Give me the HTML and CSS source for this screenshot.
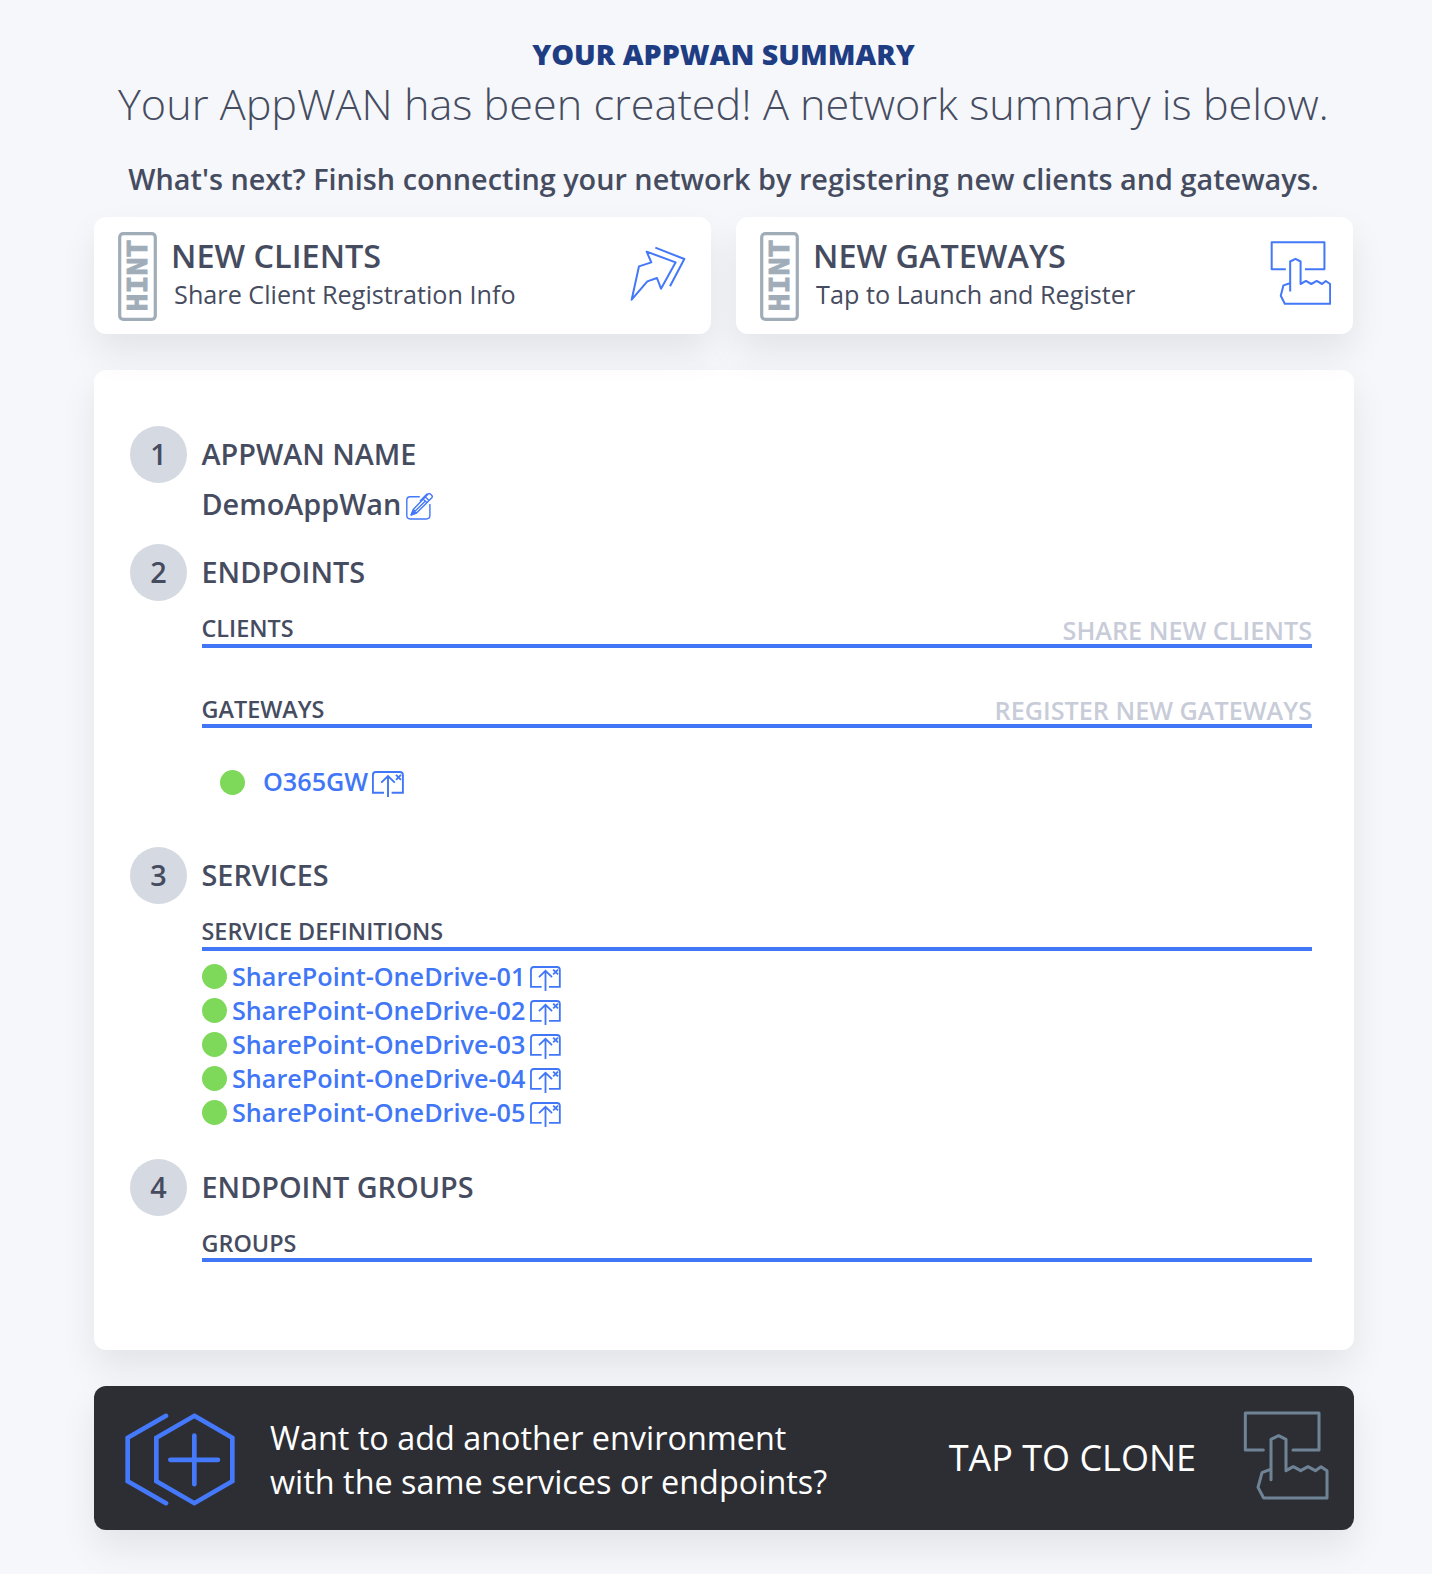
FILE: index.html
```
<!DOCTYPE html>
<html lang="en">
<head>
<meta charset="utf-8">
<title>Your AppWAN Summary</title>
<link rel="stylesheet" href="styles.css">
</head>
<body>
<svg class="sprite" aria-hidden="true">
  <symbol id="hint" viewBox="0 0 39 89">
    <rect x="1.7" y="1.7" width="35.6" height="85.6" rx="3.5" fill="none" stroke="currentColor" stroke-width="3.2"/>
    <text class="hint-text" transform="translate(29 79.6) rotate(-90)" textLength="72" lengthAdjust="spacingAndGlyphs">HINT</text>
  </symbol>
  <symbol id="launch" viewBox="0 0 32 26">
    <g fill="none" stroke="currentColor" stroke-width="1.9">
      <path d="M12 21.7H.9V4q0-3 3-3h24q3 0 3 3v17.7H19.6"/>
      <path d="M16 26V5M9.2 11.6 16 5l6.8 6.6M24 3.8l5 5M29 3.8l-5 5"/>
    </g>
  </symbol>
</svg>
<main class="page">
  <h1 class="title">YOUR APPWAN SUMMARY</h1>
  <p class="lead">Your AppWAN has been created! A network summary is below.</p>
  <p class="next">What's next? Finish connecting your network by registering new clients and gateways.</p>

  <div class="hints">
    <div class="hint-card">
      <svg class="hint-badge"><use href="#hint"/></svg>
      <div class="hint-copy">
        <div class="hint-title">NEW CLIENTS</div>
        <div class="hint-sub">Share Client Registration Info</div>
      </div>
      <svg class="icon-share" viewBox="60 48 168 168" fill="none" stroke="currentColor" stroke-width="6" stroke-linejoin="round">
        <path d="M110 65 197 97 153 176 141 144 112 154 65 209 87 109 124 97ZM136 53 223 87 180 169"/>
      </svg>
    </div>
    <div class="hint-card">
      <svg class="hint-badge"><use href="#hint"/></svg>
      <div class="hint-copy">
        <div class="hint-title">NEW GATEWAYS</div>
        <div class="hint-sub">Tap to Launch and Register</div>
      </div>
      <svg class="icon-tap" viewBox="60 46 183 192" fill="none" stroke="currentColor" stroke-width="6" stroke-linejoin="round">
        <path d="M107 130H65V50H222V130H164M120 196V107L136 99 151 107V174L167 165 183 174 199 165 215 174 226 165 239 174V233H104L92 209 100 178 119 172"/>
      </svg>
    </div>
  </div>

  <section class="summary">
    <div class="step step-name">
      <span class="num">1</span>
      <h2 class="step-title">APPWAN NAME</h2>
      <div class="step-body appwan">
        <span>DemoAppWan</span>
        <svg class="icon-edit" viewBox="0 0 27 27" fill="none" stroke="currentColor" stroke-width="1.4" stroke-linejoin="round">
          <path d="M13.8 3.7H4.2Q.8 3.7.8 7.1V22.6Q.8 26 4.2 26H20.4Q23.9 26 23.9 22.6V11"/>
          <path d="M21.9 1.2Q23-.1 24.3 1.1L25.8 2.5Q26.8 3.6 25.8 4.7L10.6 20 5.1 22 7.2 16.5ZM19.3 3.9 23 7.6M17.2 6 21 9.7M9 18.3 19.6 7.7M13.9 8.2 20.7 1.3H22M7.2 16.5 10.6 20"/>
          <path fill="currentColor" d="M7 18 9 20.2 5.2 21.8Z"/>
        </svg>
      </div>
    </div>

    <div class="step step-endpoints">
      <span class="num">2</span>
      <h2 class="step-title">ENDPOINTS</h2>
      <div class="step-body">
        <div class="bar"><span class="bar-name">CLIENTS</span><span class="bar-action">SHARE NEW CLIENTS</span></div>
        <div class="bar bar-gateways"><span class="bar-name">GATEWAYS</span><span class="bar-action">REGISTER NEW GATEWAYS</span></div>
        <div class="item item-gateway"><i class="dot"></i><a>O365GW</a><svg class="icon-launch"><use href="#launch"/></svg></div>
      </div>
    </div>

    <div class="step step-services">
      <span class="num">3</span>
      <h2 class="step-title">SERVICES</h2>
      <div class="step-body">
        <div class="bar"><span class="bar-name">SERVICE DEFINITIONS</span></div>
        <div class="items">
          <div class="item"><i class="dot"></i><a>SharePoint-OneDrive-01</a><svg class="icon-launch"><use href="#launch"/></svg></div>
          <div class="item"><i class="dot"></i><a>SharePoint-OneDrive-02</a><svg class="icon-launch"><use href="#launch"/></svg></div>
          <div class="item"><i class="dot"></i><a>SharePoint-OneDrive-03</a><svg class="icon-launch"><use href="#launch"/></svg></div>
          <div class="item"><i class="dot"></i><a>SharePoint-OneDrive-04</a><svg class="icon-launch"><use href="#launch"/></svg></div>
          <div class="item"><i class="dot"></i><a>SharePoint-OneDrive-05</a><svg class="icon-launch"><use href="#launch"/></svg></div>
        </div>
      </div>
    </div>

    <div class="step">
      <span class="num">4</span>
      <h2 class="step-title">ENDPOINT GROUPS</h2>
      <div class="step-body">
        <div class="bar bar-groups"><span class="bar-name">GROUPS</span></div>
      </div>
    </div>
  </section>

  <footer class="clone">
    <svg class="icon-hex" viewBox="104 128 330 278" fill="none" stroke="currentColor" stroke-width="14" stroke-linecap="round">
      <path d="M227 136 112 202V332L227 398M312 136 426 202V332L312 398 198 332V202ZM312 195V341M240 268H383"/>
    </svg>
    <p class="clone-copy">Want to add another environment<br>with the same services or endpoints?</p>
    <span class="clone-action">TAP TO CLONE</span>
    <svg class="icon-clone" viewBox="970 123 258 267" fill="none" stroke="currentColor" stroke-width="9" stroke-linejoin="round" stroke-linecap="round">
      <path d="M1031 240H977V129H1198V240H1120M1054 329V208L1077 197 1099 208V302L1121 290 1143 302 1165 290 1187 302 1204 290 1222 302V384H1032L1015 352 1027 308 1050 299"/>
    </svg>
  </footer>
</main>
</body>
</html>
```
FILE: styles.css
```
* { box-sizing: border-box; margin: 0; padding: 0; }

body {
  background: #f5f7fb;
  color: #464c5f;
  font-family: "Open Sans", sans-serif;
  font-weight: 600;
}

svg { display: block; flex: none; }
.sprite { display: none; }

.page {
  width: 1260px;
  min-height: 1574px;
  margin-left: 94px;
  padding-top: 34px;
}

.title, .lead, .next {
  margin-left: -1px;
  text-align: center;
  white-space: nowrap;
}
.title {
  color: #1f3d83;
  font-size: 28.7px;
  line-height: 40px;
  font-weight: 800;
}
.lead {
  margin-top: 2px;
  font-size: 43.2px;
  line-height: 56px;
  font-weight: 300;
}
.next {
  margin-top: 27px;
  font-size: 28.8px;
  line-height: 40px;
}

.hints {
  display: grid;
  grid-template-columns: 617px 617px;
  gap: 25px;
  margin-top: 18px;
}
.hint-card, .summary, .clone {
  border-radius: 12px;
  box-shadow: 0 18px 36px rgba(0, 0, 0, .08);
}
.hint-card {
  display: flex;
  align-items: flex-start;
  height: 117px;
  padding: 15px 25px 0 23.5px;
  background: #fff;
}
.hint-badge { width: 39px; height: 89px; color: #a0adb9; }
.hint-text {
  fill: currentColor;
  stroke: currentColor;
  stroke-width: .9px;
  font: bold 27px "DejaVu Sans Mono", monospace;
}
.hint-copy { flex: 1; margin: 3px 0 0 14.6px; }
.hint-title { font-size: 32.4px; line-height: 40px; }
.hint-sub {
  margin: 2px 0 0 3px;
  font-size: 25.2px;
  line-height: 34px;
  font-weight: 400;
}
.icon-share { width: 56px; height: 56px; margin-top: 14px; color: #4378f8; }
.icon-tap { width: 61.5px; height: 64.5px; margin: 8.5px -3px 0 0; color: #4378f8; }

.summary {
  height: 980px;
  margin-top: 36px;
  padding: 56px 42px 0 36px;
  background: #fff;
}
.step {
  display: grid;
  grid-template-columns: 57px 1fr;
  grid-template-rows: 57px auto;
  column-gap: 15px;
}
.step-name { margin-bottom: 20px; }
.step-endpoints { margin-bottom: 48px; }
.step-services { margin-bottom: 29px; }
.num {
  display: grid;
  place-items: center;
  border-radius: 50%;
  background: #d5d9e2;
  font-size: 28.8px;
  line-height: 40px;
  padding-bottom: 1px;
}
.step-title {
  align-self: center;
  margin-left: -.5px;
  padding-bottom: 1px;
  font-size: 28.8px;
  line-height: 40px;
  font-weight: 600;
}
.step-body { grid-column: 2; }
.appwan {
  display: flex;
  gap: 4.5px;
  margin-left: -.5px;
  padding-top: 1px;
  font-size: 28.8px;
  line-height: 40px;
}
.icon-edit { width: 27px; height: 27px; margin-top: 9px; color: #4378f8; }

.bar {
  display: flex;
  justify-content: space-between;
  align-items: flex-end;
  height: 47px;
  border-bottom: 4px solid #4177f7;
}
.bar-gateways { height: 80px; }
.bar-groups { height: 46px; }
.bar-name { margin-left: -.5px; font-size: 23.4px; line-height: 32px; }
.bar-gateways .bar-name, .bar-groups .bar-name { line-height: 30px; }
.bar-action { color: #c8ccd8; font-size: 25.2px; line-height: 28px; }

.items { padding-top: 9px; }
.item {
  display: flex;
  align-items: center;
  height: 34px;
  gap: 5px;
  color: #4177f7;
  font-size: 25.2px;
  line-height: 34px;
}
.item a { margin-top: -2px; }
.dot {
  width: 25px;
  height: 25px;
  margin-top: -1px;
  border-radius: 50%;
  background: #7ed95a;
}
.icon-launch { width: 31px; height: 25px; margin-top: 2px; }
.item-gateway { margin-top: 37px; padding-left: 18px; }
.item-gateway .dot { margin-top: 0; }
.item-gateway a { margin: -2px -1px 0 13px; }
.item-gateway .icon-launch { width: 32px; height: 26px; margin-top: 3px; }

.clone {
  display: flex;
  align-items: center;
  height: 144px;
  margin-top: 36px;
  padding: 0 25px 0 31px;
  background: #2d2e34;
  color: #fff;
  font-weight: 400;
}
.icon-hex { width: 110px; height: 93px; margin: 2px 0 0 -.5px; color: #4579fb; }
.clone-copy { flex: 1; margin: 1px 0 0 35.5px; font-size: 32.4px; line-height: 44px; }
.clone-action { margin: 0 47px 0 0; font-size: 36px; line-height: 48px; }
.icon-clone { width: 86px; height: 89px; margin-bottom: 5px; color: #6e8496; }
```
